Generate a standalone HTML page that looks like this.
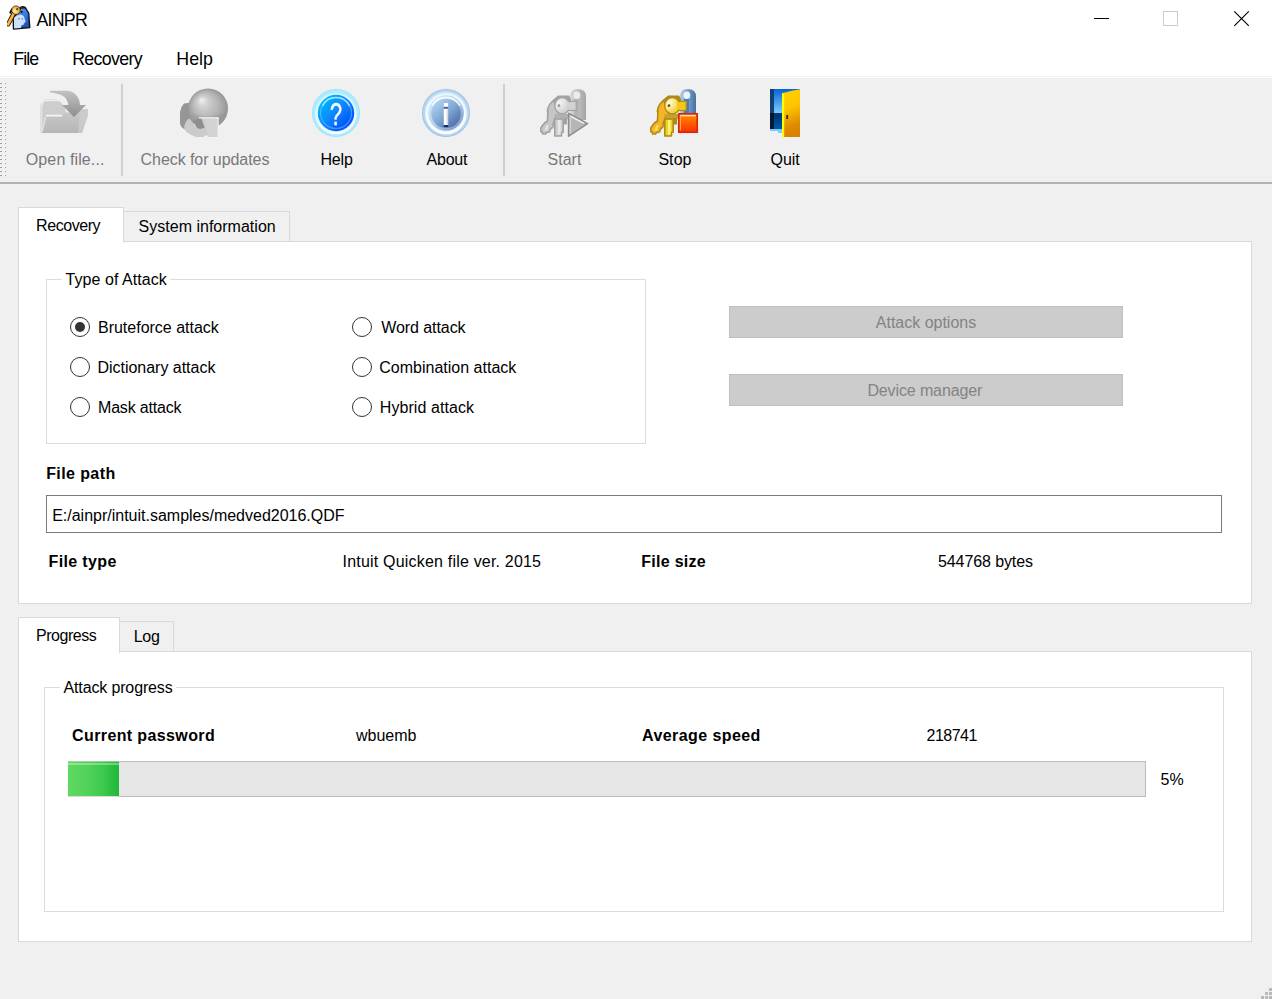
<!DOCTYPE html>
<html lang="en"><head><meta charset="utf-8"><title>AINPR</title>
<style>
html,body{margin:0;padding:0;}
body{background:#f0f0f0;font-family:"Liberation Sans",sans-serif;overflow:hidden;}
#win{position:relative;width:1272px;height:999px;background:#f0f0f0;overflow:hidden;}
#win *{box-sizing:border-box;}
.a{position:absolute;}
.t{position:absolute;white-space:nowrap;line-height:24px;height:24px;}
#topbar{left:0;top:0;width:1272px;height:78px;background:#fff;}
#topline{left:0;top:76px;width:1272px;height:1px;background:#f4f4f4;}
#tbline1{left:0;top:182px;width:1272px;height:2px;background:#b3b3b3;}
#tbline2{display:none;}
.sep{top:84px;width:2px;height:92px;background:#cfcfcf;}
.pane{background:#fff;border:1px solid #d9d9d9;}
.tabsel{background:#fff;border:1px solid #d9d9d9;border-bottom:none;}
.tab{background:#f0f0f0;border:1px solid #d9d9d9;border-left:none;border-bottom:none;}
.gb{border:1px solid #dcdcdc;}
.gbgap{background:#fff;height:3px;}
.radio{width:20px;height:20px;border-radius:50%;border:1.4px solid #333;background:#fff;}
.radio.on::after{content:"";position:absolute;left:50%;top:50%;width:10px;height:10px;margin:-5px 0 0 -5px;border-radius:50%;background:#333;}
.btn{background:#ccc;border:1px solid #bfbfbf;}
#input{left:46px;top:495px;width:1176px;height:38px;background:#fff;border:1px solid #7a7a7a;}
#pbar{left:68px;top:761px;width:1078px;height:36px;background:#e6e6e6;border:1px solid #bcbcbc;}
#pchunk{left:68px;top:761px;width:51px;height:35px;background:linear-gradient(90deg,#5ed963 0%,#54d25c 35%,#3cc84e 70%,#1fb836 100%);}
#pchunk::before{content:"";position:absolute;left:0;top:0;width:100%;height:1px;background:rgba(200,215,200,.62);}
#pchunk::after{content:"";position:absolute;left:0;top:2px;width:100%;height:2px;background:rgba(255,255,255,.33);}
#pchunkb{left:68px;top:796px;width:51px;height:1px;background:#dadada;}

</style></head>
<body>
<div id="win">
<div class="a" id="topbar"></div>
<div class="a" id="topline"></div>
<div class="a" id="tbline1"></div>
<div class="a" id="tbline2"></div>
<div class="a sep" style="left:121px"></div>
<div class="a sep" style="left:503px"></div>

<!-- upper tab widget -->
<div class="a pane" style="left:18px;top:241px;width:1234px;height:363px"></div>
<div class="a tab" style="left:123px;top:211px;width:167px;height:30px"></div>
<div class="a tabsel" style="left:18px;top:207px;width:106px;height:36px"></div>

<div class="a gb" style="left:46px;top:279px;width:600px;height:165px"></div>
<div class="a gbgap" style="left:62px;top:278px;width:108px"></div>

<div class="a radio on" style="left:70px;top:317px"></div>
<div class="a radio" style="left:70px;top:357px"></div>
<div class="a radio" style="left:70px;top:397px"></div>
<div class="a radio" style="left:352px;top:317px"></div>
<div class="a radio" style="left:352px;top:357px"></div>
<div class="a radio" style="left:352px;top:397px"></div>

<div class="a btn" style="left:729px;top:306px;width:394px;height:32px"></div>
<div class="a btn" style="left:729px;top:374px;width:394px;height:32px"></div>

<div class="a" id="input"></div>

<!-- lower tab widget -->
<div class="a pane" style="left:18px;top:651px;width:1234px;height:291px"></div>
<div class="a tab" style="left:119px;top:621px;width:55px;height:30px"></div>
<div class="a tabsel" style="left:18px;top:617px;width:102px;height:36px"></div>

<div class="a gb" style="left:44px;top:687px;width:1180px;height:225px"></div>
<div class="a gbgap" style="left:60px;top:686px;width:116px"></div>

<div class="a" id="pbar"></div>
<div class="a" id="pchunk"></div>
<div class="a" id="pchunkb"></div>

<svg class="a" id="handle" style="left:0;top:80px" width="8" height="102" viewBox="0 80 8 102">
<defs><pattern id="pdots" x="0" y="82" width="8" height="4" patternUnits="userSpaceOnUse">
<rect x="0" y="0" width="1" height="1" fill="#fff"/><rect x="0" y="1" width="2" height="1" fill="#a0a0a0"/>
<rect x="4" y="0" width="1" height="1" fill="#fff"/><rect x="5" y="1" width="1" height="1" fill="#a0a0a0"/>
</pattern></defs>
<rect x="0" y="82" width="8" height="96" fill="url(#pdots)"/>
</svg>
<svg class="a" id="grip" style="left:1256px;top:983px" width="16" height="16" viewBox="1256 983 16 16">
<g fill="#b9b9b9">
<rect x="1269" y="988" width="3" height="3"/>
<rect x="1265" y="992" width="3" height="3"/><rect x="1269" y="992" width="3" height="3"/>
<rect x="1261" y="996" width="3" height="3"/><rect x="1265" y="996" width="3" height="3"/><rect x="1269" y="996" width="3" height="3"/>
</g></svg>

<svg class="a" style="left:0;top:0" width="1272" height="200" viewBox="0 0 1272 200">
<defs>
<filter id="soft" x="-5%" y="-5%" width="110%" height="110%"><feGaussianBlur stdDeviation="0.45"/></filter>
<filter id="soft2" x="-5%" y="-5%" width="110%" height="110%"><feGaussianBlur stdDeviation="0.7"/></filter>
<linearGradient id="gArrow" x1="0" y1="0" x2="0" y2="1"><stop offset="0" stop-color="#c2c2c2"/><stop offset="1" stop-color="#8f8f8f"/></linearGradient>
<linearGradient id="gFold" x1="0" y1="0" x2="0" y2="1"><stop offset="0" stop-color="#cacaca"/><stop offset="1" stop-color="#b6b6b6"/></linearGradient>
<radialGradient id="gGlobe" cx="208" cy="108.5" r="21" fx="201" fy="99.5" gradientUnits="userSpaceOnUse"><stop offset="0" stop-color="#f2f2f2"/><stop offset=".25" stop-color="#d0d0d0"/><stop offset=".6" stop-color="#b6b6b6"/><stop offset="1" stop-color="#929292"/></radialGradient>
<radialGradient id="gHelpOut" cx="336" cy="113" r="24" gradientUnits="userSpaceOnUse"><stop offset=".72" stop-color="#dcf7ff"/><stop offset=".84" stop-color="#b4ecff"/><stop offset="1" stop-color="#98e2ff"/></radialGradient>
<linearGradient id="gHelpIn" x1="322" y1="98" x2="350" y2="128" gradientUnits="userSpaceOnUse"><stop offset="0" stop-color="#00c0ff"/><stop offset=".5" stop-color="#0a84ff"/><stop offset="1" stop-color="#0048f8"/></linearGradient>
<radialGradient id="gAbOut" cx="446" cy="113" r="24" gradientUnits="userSpaceOnUse"><stop offset=".72" stop-color="#f2faff"/><stop offset=".86" stop-color="#cfe6f8"/><stop offset="1" stop-color="#94bce2"/></radialGradient>
<linearGradient id="gAbMid" x1="433" y1="99" x2="459" y2="128" gradientUnits="userSpaceOnUse"><stop offset="0" stop-color="#d2eafa"/><stop offset=".5" stop-color="#b4d0ee"/><stop offset="1" stop-color="#7c98cc"/></linearGradient>
<linearGradient id="gAbIn" x1="433" y1="99" x2="459" y2="128" gradientUnits="userSpaceOnUse"><stop offset="0" stop-color="#b8dcf6"/><stop offset=".5" stop-color="#82a8d4"/><stop offset="1" stop-color="#42609e"/></linearGradient>
<linearGradient id="gWhiteRing" x1="0" y1="92" x2="0" y2="134" gradientUnits="userSpaceOnUse"><stop offset="0" stop-color="#fff" stop-opacity=".25"/><stop offset=".45" stop-color="#fff" stop-opacity=".6"/><stop offset="1" stop-color="#fff" stop-opacity="1"/></linearGradient>
<linearGradient id="gTag" x1="18" y1="9" x2="28" y2="28" gradientUnits="userSpaceOnUse"><stop offset="0" stop-color="#4f93ee"/><stop offset=".5" stop-color="#2e6fd8"/><stop offset="1" stop-color="#1848a8"/></linearGradient>
<radialGradient id="gKeyHead" cx=".35" cy=".6" r=".75"><stop offset="0" stop-color="#ffe9bc"/><stop offset=".6" stop-color="#f8b440"/><stop offset="1" stop-color="#e89418"/></radialGradient>
<linearGradient id="gRingB" x1="0" y1="0" x2="1" y2="0"><stop offset="0" stop-color="#b4cce8"/><stop offset=".45" stop-color="#7ca4d4"/><stop offset="1" stop-color="#46709e"/></linearGradient>
<linearGradient id="gRingG" x1="0" y1="0" x2="1" y2="0"><stop offset="0" stop-color="#d8d8d8"/><stop offset=".45" stop-color="#c2c2c2"/><stop offset="1" stop-color="#a4a4a4"/></linearGradient>
<radialGradient id="gHeadY" cx=".3" cy=".3" r=".8"><stop offset="0" stop-color="#fffbe6"/><stop offset=".45" stop-color="#fde48a"/><stop offset="1" stop-color="#f4c41c"/></radialGradient>
<radialGradient id="gHeadG" cx=".3" cy=".3" r=".8"><stop offset="0" stop-color="#f4f4f4"/><stop offset=".45" stop-color="#e2e2e2"/><stop offset="1" stop-color="#c8c8c8"/></radialGradient>
<linearGradient id="gRed" x1="0" y1="0" x2="0" y2="1"><stop offset="0" stop-color="#ff8c00"/><stop offset="1" stop-color="#ff3000"/></linearGradient>
<linearGradient id="gDoor" x1="784" y1="95" x2="800" y2="132" gradientUnits="userSpaceOnUse"><stop offset="0" stop-color="#ffce00"/><stop offset=".35" stop-color="#fcc400"/><stop offset=".8" stop-color="#de8a00"/><stop offset="1" stop-color="#d88200"/></linearGradient>
<linearGradient id="gSky" x1="0" y1="89" x2="0" y2="113" gradientUnits="userSpaceOnUse"><stop offset="0" stop-color="#0664d6"/><stop offset="1" stop-color="#7cccff"/></linearGradient>
<linearGradient id="gSea" x1="0" y1="115" x2="0" y2="129" gradientUnits="userSpaceOnUse"><stop offset="0" stop-color="#003470"/><stop offset="1" stop-color="#0058b0"/></linearGradient>
</defs>
<g filter="url(#soft2)">
<path d="M40.5 133 L40.5 104.5 L44 101.2 L59.8 101.2 L64.5 106.5 L66 113 L66 133 Z" fill="#cdcdcd"/>
<path d="M40.5 133 L40.5 104.5 L44 101.2 L44 104 L42.3 106 L42.3 133 Z" fill="#e2e2e2"/>
<path d="M44 99.6 H57" stroke="#e2e2e2" stroke-width="1.2"/>
<path d="M42 133 L46 117 L62 117 L65 112.6 L74 112.6 L80 109 L88 109 L88 115 L86 121 L84 127 L82 133 Z" fill="url(#gFold)"/>
<path d="M80 109 L88 109 L88 115 L86 121 L84 127 L82 133 L78 133 Z" fill="#cfcfcf" opacity=".7"/>
<path d="M46 115.6 H62" stroke="#f6f6f6" stroke-width="1.6"/>
<path d="M45.6 117 L42.3 131" stroke="#dedede" stroke-width="1.6"/>
<path d="M50 90.8 L68 90.8 C74 91.5 79.5 96 80 105 L86 105 L74 117 L62 105 L68.3 105 C67.8 100 65 96.5 60 94.6 C57 93.4 53.5 92.6 50 92.4 Z" fill="url(#gArrow)"/>
</g>
<g filter="url(#soft2)">
<path d="M188 103 L184 103.5 L181.5 107 L180 112 L180 124 L181.5 127 L184 129 L194 130 L194 103 Z" fill="#969696"/>
<circle cx="208" cy="108.5" r="20" fill="url(#gGlobe)"/>
<path d="M192 113 C198 117 216 118 226 112 C224 120 218 126 208 128.5 C200 128 194 122 192 113 Z" fill="#8a8a8a" opacity=".3"/>
<path d="M187.6 119.5 L189.5 118.5 L197 128 Q201 130 204.5 127.5 L199 117.4 L218 117.4 L218 137 L208 137 L208 135.4 L204 135.4 L204 137 L196 137 L190 134.5 L186.5 132 L184.3 129.5 L184.3 126 L185.5 122.5 Z" fill="#cbcbcb"/>
<path d="M193 121 L201 117.6 L204.5 127.5 Q201 130 197 128 Z" fill="#8e8e8e"/>
<path d="M199 117.9 H218 V137" fill="none" stroke="#f4f4f4" stroke-width="1.4"/>
<path d="M204.5 119 L218 119 L218 137 L208 137 Z" fill="#d8d8d8" opacity=".6"/>
</g>
<g filter="url(#soft)">
<circle cx="336" cy="113" r="24" fill="url(#gHelpOut)"/>
<circle cx="336" cy="113" r="22.2" fill="none" stroke="#b4ecff" stroke-width="1.6" opacity=".8"/>
<circle cx="336" cy="113.6" r="19.6" fill="none" stroke="url(#gWhiteRing)" stroke-width="2.2"/>
<circle cx="336" cy="113" r="18.2" fill="url(#gHelpIn)"/>
<path d="M322.5 106 A15 15 0 0 1 349.5 106" fill="none" stroke="#ffffff" stroke-width="1.5" opacity=".75"/>
<circle cx="336" cy="113" r="15.5" fill="none" stroke="#8fd8ff" stroke-width="1.2" opacity=".45"/>
<text x="336" y="125.2" text-anchor="middle" font-family="Liberation Sans, sans-serif" font-weight="400" font-size="30.5" fill="#ffffff" stroke="#ffffff" stroke-width=".5" textLength="12" lengthAdjust="spacingAndGlyphs">?</text>
</g>
<g filter="url(#soft)">
<circle cx="446" cy="113" r="24" fill="url(#gAbOut)"/>
<circle cx="446" cy="113" r="22.4" fill="none" stroke="#b6d4ee" stroke-width="1.4" opacity=".8"/>
<circle cx="446" cy="113.6" r="19.4" fill="none" stroke="url(#gWhiteRing)" stroke-width="2.4"/>
<circle cx="446" cy="113" r="17.8" fill="url(#gAbMid)"/>
<circle cx="446" cy="113.3" r="14.8" fill="url(#gAbIn)"/>
<path d="M432.2 105.5 A16 16 0 0 1 459.8 105.5" fill="none" stroke="#ffffff" stroke-width="1.6" opacity=".85"/>
<rect x="443.8" y="103" width="4.3" height="3.9" fill="#ffffff"/>
<rect x="443.8" y="106.9" width="4.3" height="1.9" fill="#3c5898"/>
<rect x="443.8" y="108.8" width="4.3" height="16.2" fill="#ffffff"/>
<rect x="446.4" y="109.5" width="1.7" height="15" fill="#d8dcec"/>
<rect x="443.8" y="125" width="4.3" height="2" fill="#16286a"/>
</g>
<g filter="url(#soft)"><path d="M570 120 L570 97 Q570 89 578 89 Q586 89 586 97 L586 120 Z" fill="url(#gRingG)"/><path d="M574 99 L579 99 L579 120 L574 120 Z" fill="#b4b4b4"/><ellipse cx="576.8" cy="95.3" rx="3.4" ry="3.8" fill="#ececec"/><polygon points="558.0,95.5 569.0,95.5 571.0,99.0 571.0,102.0 560.0,115.0 548.0,115.0 546.5,111.0 548.5,106.0 551.0,102.0 554.5,98.5" fill="#a2a2a2"/><polygon points="554.0,100.0 550.0,104.0 548.0,108.0 547.5,121.0 544.5,123.0 542.5,125.5 540.8,128.0 540.8,131.5 542.5,132.5 542.5,134.0 545.5,134.0 546.5,132.5 549.5,132.0 550.8,128.5 552.8,127.5 553.3,123.0 555.5,117.0 561.0,116.0 556.0,109.0" fill="#c6c6c6" stroke="#a2a2a2" stroke-width="1.6" stroke-linejoin="round"/><polygon points="546.5,125.0 548.5,125.0 547.5,130.5 544.0,131.0" fill="#e2e2e2"/><polygon points="555.0,114.0 569.0,114.0 567.5,119.5 553.5,119.5" fill="#b2b2b2"/><polygon points="554.8,119.0 563.2,119.0 563.2,132.3 561.5,132.3 561.5,136.0 554.8,136.0" fill="#d0d0d0" stroke="#a2a2a2" stroke-width="1.6" stroke-linejoin="round"/><rect x="558" y="120" width="2.6" height="14.5" fill="#e6e6e6"/><polygon points="563.5,118.0 567.0,118.0 567.0,124.5 563.5,124.5" fill="#a2a2a2"/><rect x="568" y="101.3" width="8.2" height="9.2" fill="#d2d2d2" stroke="#a2a2a2" stroke-width="1.2"/><ellipse cx="562.3" cy="105.8" rx="7.6" ry="8.1" fill="url(#gHeadG)" stroke="#a2a2a2" stroke-width="1.3"/><rect x="567" y="102.2" width="4" height="7.4" fill="#d2d2d2"/><circle cx="559" cy="105.7" r="1.35" fill="#9a9a9a"/><polygon points="568.6,113.2 587.6,123.6 568.6,136.2" fill="#b6b6b6" stroke="#8e8e8e" stroke-width="1.6" stroke-linejoin="round"/><path d="M570.2 116 L584 123.4" stroke="#ececec" stroke-width="1.5"/><path d="M570.4 116 L570.4 134" stroke="#d2d2d2" stroke-width="1.4"/></g>
<g filter="url(#soft)"><path d="M680 113 L680 97 Q680 89 688 89 Q696 89 696 97 L696 113 Z" fill="url(#gRingB)"/><path d="M684 99 L689 99 L689 113 L684 113 Z" fill="#4c7cb4"/><ellipse cx="686.8" cy="95.3" rx="3.4" ry="3.8" fill="#eef3fa"/><polygon points="668.0,95.5 679.0,95.5 681.0,99.0 681.0,102.0 670.0,115.0 658.0,115.0 656.5,111.0 658.5,106.0 661.0,102.0 664.5,98.5" fill="#ae8a14"/><polygon points="664.0,100.0 660.0,104.0 658.0,108.0 657.5,121.0 654.5,123.0 652.5,125.5 650.8,128.0 650.8,131.5 652.5,132.5 652.5,134.0 655.5,134.0 656.5,132.5 659.5,132.0 660.8,128.5 662.8,127.5 663.3,123.0 665.5,117.0 671.0,116.0 666.0,109.0" fill="#f8b426" stroke="#ae8a14" stroke-width="1.6" stroke-linejoin="round"/><polygon points="656.5,125.0 658.5,125.0 657.5,130.5 654.0,131.0" fill="#f2e060"/><polygon points="665.0,114.0 679.0,114.0 677.5,119.5 663.5,119.5" fill="#c8a030"/><polygon points="664.8,119.0 673.2,119.0 673.2,132.3 671.5,132.3 671.5,136.0 664.8,136.0" fill="#eed222" stroke="#ae8a14" stroke-width="1.6" stroke-linejoin="round"/><rect x="668" y="120" width="2.6" height="14.5" fill="#fff27a"/><polygon points="673.5,118.0 677.0,118.0 677.0,124.5 673.5,124.5" fill="#ae8a14"/><rect x="678" y="101.3" width="8.2" height="9.2" fill="#f4c814" stroke="#ae8a14" stroke-width="1.2"/><ellipse cx="672.3" cy="105.8" rx="7.6" ry="8.1" fill="url(#gHeadY)" stroke="#ae8a14" stroke-width="1.3"/><rect x="677" y="102.2" width="4" height="7.4" fill="#f4c814"/><circle cx="669" cy="105.7" r="1.35" fill="#6e5200"/><rect x="678.8" y="113.8" width="18.4" height="18.4" fill="url(#gRed)" stroke="#d22c0c" stroke-width="1.7"/><path d="M680.2 115.6 H695.8" stroke="#ffe0b8" stroke-width="1.4"/><path d="M680.4 115.6 V130.5" stroke="#ffb478" stroke-width="1.2" opacity=".8"/></g>
<g>
<rect x="769.3" y="88.3" width="31.4" height="49.2" fill="#f8f8fc" opacity=".0"/>
<path d="M770 89 H800 V94 H782 V129 H770 Z" fill="url(#gSky)"/>
<rect x="770" y="113" width="12" height="16" fill="url(#gSea)"/>
<rect x="770" y="113" width="12" height="2" fill="#0e3c6a"/>
<rect x="770" y="89" width="4" height="24" fill="#0e3a66" opacity=".92"/>
<rect x="770" y="113" width="4" height="16" fill="#031a36"/>
<rect x="770" y="129" width="12" height="2" fill="#78c8ff"/>
<rect x="778" y="131" width="4" height="2" fill="#7cccff"/>
<path d="M782 93.5 L786 92.2 L792 90.8 L800 89.2 L800 137 L782 137 Z" fill="url(#gDoor)"/>
<path d="M782 93.5 L784.2 92.9 L784.2 137 L782 137 Z" fill="#ffff00"/>
<rect x="786.2" y="115" width="1.9" height="4" fill="#3a2c00"/>
<rect x="786.2" y="119.4" width="1.9" height="1.2" fill="#c89800" opacity=".6"/>
</g>
<!-- title icon -->
<g filter="url(#soft)">
<path d="M19.2 8.6 C20 6.2 25.2 5.8 25.8 8.8" fill="none" stroke="#111" stroke-width="1.5"/>
<path d="M20.8 8.2 L25.2 7.6 L28.7 13 L29.8 27.6 L13.4 29 L13.2 18 Z" fill="url(#gTag)" stroke="#0a0a0a" stroke-width="1.3" stroke-linejoin="round"/>
<path d="M14 17.5 L17 15.6 L20.5 14.6 L23 15.4 L24.4 17.6 L24.8 19.6 L26 21.2 L24.8 21.8 L24.8 23 L23.8 23.4 L23.8 24.6 L21.6 25.2 L20.8 28 L14.1 28.4 Z" fill="#cfe0fb"/>
<rect x="18.2" y="18" width="1.4" height="1.6" fill="#5d8fe0"/><rect x="21.6" y="18" width="1.4" height="1.6" fill="#5d8fe0"/>
<circle cx="21.7" cy="11.9" r="1.1" fill="#1a1a1a"/>
<path d="M13.6 13.8 L8.2 24.2" stroke="#1a1300" stroke-width="4.6" stroke-linecap="round"/>
<path d="M13.6 13.8 L8.2 24.2" stroke="#f0a830" stroke-width="3" stroke-linecap="round" stroke-dasharray="1.2 1.1"/>
<path d="M13.6 13.8 L8.2 24.2" stroke="#f6b848" stroke-width="1.4" stroke-linecap="round"/>
<path d="M10.4 12.6 L12 9.5" stroke="#111" stroke-width="2.2" stroke-linecap="round"/>
<circle cx="16" cy="10.2" r="4.3" fill="url(#gKeyHead)" stroke="#3a2600" stroke-width=".8"/>
<circle cx="17.2" cy="9.2" r="1.1" fill="#3c4658"/>
</g>
<!-- window controls -->
<path d="M1094 18.5 H1109" stroke="#000" stroke-width="1"/>
<rect x="1163.5" y="11.5" width="14" height="14" fill="none" stroke="#cccccc" stroke-width="1"/>
<path d="M1234.3 11.3 L1248.8 25.8 M1248.8 11.3 L1234.3 25.8" stroke="#000" stroke-width="1.15"/>

</svg>
<span class="t" id="t_title" style="left:36.40px;top:8.00px;font-size:17.8px;font-weight:400;color:#000;letter-spacing:-0.725px">AINPR</span>
<span class="t" id="m_file" style="left:13.20px;top:47.00px;font-size:17.8px;font-weight:400;color:#000;letter-spacing:-0.921px">File</span>
<span class="t" id="m_rec" style="left:72.20px;top:47.00px;font-size:17.8px;font-weight:400;color:#000;letter-spacing:-0.659px">Recovery</span>
<span class="t" id="m_help" style="left:176.30px;top:47.00px;font-size:17.8px;font-weight:400;color:#000;letter-spacing:0.040px">Help</span>
<span class="t" id="tb_open" style="left:25.80px;top:147.50px;font-size:16px;font-weight:400;color:#787878;letter-spacing:0.115px">Open file...</span>
<span class="t" id="tb_check" style="left:140.60px;top:147.50px;font-size:16px;font-weight:400;color:#787878;letter-spacing:-0.066px">Check for updates</span>
<span class="t" id="tb_help" style="left:320.40px;top:147.50px;font-size:16px;font-weight:400;color:#000;letter-spacing:-0.169px">Help</span>
<span class="t" id="tb_about" style="left:426.50px;top:147.50px;font-size:16px;font-weight:400;color:#000;letter-spacing:-0.217px">About</span>
<span class="t" id="tb_start" style="left:547.40px;top:147.50px;font-size:16px;font-weight:400;color:#787878;letter-spacing:0.064px">Start</span>
<span class="t" id="tb_stop" style="left:658.40px;top:147.50px;font-size:16px;font-weight:400;color:#000;letter-spacing:0.061px">Stop</span>
<span class="t" id="tb_quit" style="left:770.60px;top:147.50px;font-size:16px;font-weight:400;color:#000;letter-spacing:-0.099px">Quit</span>
<span class="t" id="tab_rec" style="left:36.10px;top:213.50px;font-size:16px;font-weight:400;color:#000;letter-spacing:-0.440px">Recovery</span>
<span class="t" id="tab_sys" style="left:138.60px;top:214.50px;font-size:16px;font-weight:400;color:#000;letter-spacing:0.009px">System information</span>
<span class="t" id="gb1" style="left:65.60px;top:267.50px;font-size:16px;font-weight:400;color:#000;letter-spacing:0.047px">Type of Attack</span>
<span class="t" id="r1" style="left:98.00px;top:315.50px;font-size:16px;font-weight:400;color:#000;letter-spacing:-0.009px">Bruteforce attack</span>
<span class="t" id="r2" style="left:97.50px;top:355.50px;font-size:16px;font-weight:400;color:#000;letter-spacing:-0.023px">Dictionary attack</span>
<span class="t" id="r3" style="left:98.00px;top:395.50px;font-size:16px;font-weight:400;color:#000;letter-spacing:-0.176px">Mask attack</span>
<span class="t" id="r4" style="left:381.20px;top:315.50px;font-size:16px;font-weight:400;color:#000;letter-spacing:-0.067px">Word attack</span>
<span class="t" id="r5" style="left:379.30px;top:355.50px;font-size:16px;font-weight:400;color:#000;letter-spacing:0.002px">Combination attack</span>
<span class="t" id="r6" style="left:379.80px;top:395.50px;font-size:16px;font-weight:400;color:#000;letter-spacing:0.069px">Hybrid attack</span>
<span class="t" id="b1" style="left:875.80px;top:310.50px;font-size:16px;font-weight:400;color:#838383;letter-spacing:-0.008px">Attack options</span>
<span class="t" id="b2" style="left:867.40px;top:378.50px;font-size:16px;font-weight:400;color:#838383;letter-spacing:-0.121px">Device manager</span>
<span class="t" id="l_fp" style="left:46.20px;top:461.50px;font-size:16px;font-weight:700;color:#000;letter-spacing:0.399px">File path</span>
<span class="t" id="in_fp" style="left:52.20px;top:503.50px;font-size:16px;font-weight:400;color:#000;letter-spacing:-0.006px">E:/ainpr/intuit.samples/medved2016.QDF</span>
<span class="t" id="l_ft" style="left:48.60px;top:549.50px;font-size:16px;font-weight:700;color:#000;letter-spacing:0.349px">File type</span>
<span class="t" id="v_ft" style="left:342.60px;top:549.50px;font-size:16px;font-weight:400;color:#000;letter-spacing:0.193px">Intuit Quicken file ver. 2015</span>
<span class="t" id="l_fs" style="left:641.30px;top:549.50px;font-size:16px;font-weight:700;color:#000;letter-spacing:0.269px">File size</span>
<span class="t" id="v_fs" style="left:938.00px;top:549.50px;font-size:16px;font-weight:400;color:#000;letter-spacing:-0.098px">544768 bytes</span>
<span class="t" id="tab_prog" style="left:36.00px;top:623.50px;font-size:16px;font-weight:400;color:#000;letter-spacing:-0.460px">Progress</span>
<span class="t" id="tab_log" style="left:133.70px;top:624.50px;font-size:16px;font-weight:400;color:#000;letter-spacing:-0.248px">Log</span>
<span class="t" id="gb2" style="left:63.50px;top:675.50px;font-size:16px;font-weight:400;color:#000;letter-spacing:-0.140px">Attack progress</span>
<span class="t" id="l_cp" style="left:72.10px;top:723.50px;font-size:16px;font-weight:700;color:#000;letter-spacing:0.377px">Current password</span>
<span class="t" id="v_cp" style="left:356.00px;top:723.50px;font-size:16px;font-weight:400;color:#000;letter-spacing:0.004px">wbuemb</span>
<span class="t" id="l_as" style="left:642.00px;top:723.50px;font-size:16px;font-weight:700;color:#000;letter-spacing:0.428px">Average speed</span>
<span class="t" id="v_as" style="left:926.50px;top:723.50px;font-size:16px;font-weight:400;color:#000;letter-spacing:-0.498px">218741</span>
<span class="t" id="v_pct" style="left:1160.50px;top:767.50px;font-size:16px;font-weight:400;color:#000;letter-spacing:0.202px">5%</span>
</div>
</body></html>
